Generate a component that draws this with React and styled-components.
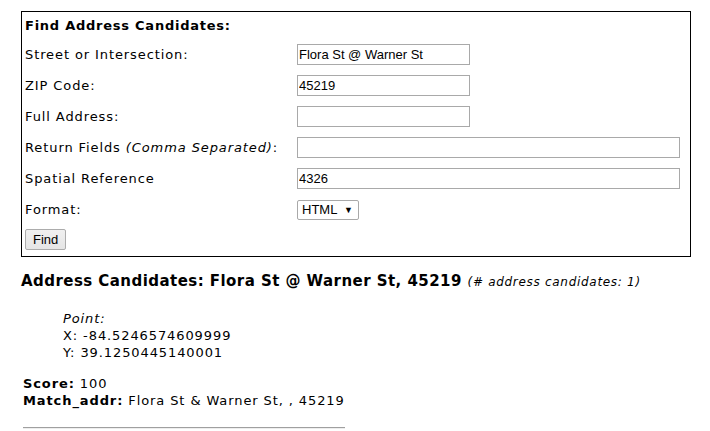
import styled, { createGlobalStyle } from 'styled-components'

const Global = createGlobalStyle`
  html, body { margin: 0; padding: 0; background: #fff; }
  body {
    font-family: "DejaVu Sans", Verdana, sans-serif;
    font-size: 13px;
    letter-spacing: 0.9px;
    color: #000;
  }
`

const Page = styled.div`
  padding: 11px 18px 0 21px;
`

const FormBox = styled.form`
  width: 670px;
  border: 1px solid #000;
  padding: 0 0 2px 2px;
  box-sizing: border-box;
`

const Title = styled.div`
  height: 27px;
  display: flex;
  align-items: center;
  font-weight: bold;
  letter-spacing: 0.75px;
  padding-left: 1px;
`

const Row = styled.div`
  display: grid;
  grid-template-columns: 272px 1fr;
  align-items: center;
  height: ${p => p.$h || 31}px;
  padding-left: 1px;
`

const Label = styled.label`
  white-space: nowrap;
  > i { font-style: italic; }
`

const TextInput = styled.input`
  font-family: "Liberation Sans", Arial, sans-serif;
  font-size: 13px;
  letter-spacing: 0;
  color: #000;
  height: 21px;
  width: ${p => (p.$wide ? '383px' : '173px')};
  box-sizing: border-box;
  border: 1px solid #a9a9a9;
  padding: 0 1px;
  margin: 0;
  outline: none;
`

const SelectBox = styled.div`
  width: 62px;
  height: 20px;
  box-sizing: border-box;
  border: 1px solid #a9a9a9;
  border-radius: 2px;
  display: flex;
  align-items: center;
  justify-content: space-between;
  padding: 0 5px 0 4px;
  font-family: "Liberation Sans", Arial, sans-serif;
  font-size: 13px;
  letter-spacing: 0;
  > span:last-child { font-size: 9px; }
`

const Button = styled.button`
  font-family: "Liberation Sans", Arial, sans-serif;
  font-size: 13px;
  letter-spacing: 0;
  height: 21px;
  padding: 0 7px;
  margin: 0;
  border: 1px solid #acacac;
  border-radius: 2px;
  background: linear-gradient(#f0f0f0, #e5e5e5);
  color: #000;
`

const Heading = styled.h3`
  margin: 15px 0 0 0;
  font-size: 15px;
  font-weight: bold;
  letter-spacing: 0.45px;
  > small {
    font-size: 12px;
    font-weight: normal;
    font-style: italic;
    letter-spacing: 0.7px;
  }
`

const PointBlock = styled.div`
  margin: 20px 0 0 42px;
  line-height: 17px;
  > i { display: block; }
`

const Details = styled.div`
  margin: 14px 0 0 2px;
  line-height: 17px;
  > div > b { font-weight: bold; }
`

const Rule = styled.hr`
  width: 322px;
  margin: 18px 0 0 2px;
  border: 0;
  border-top: 1px solid #a0a0a0;
  border-bottom: 1px solid #eee;
`

export default function App() {
  return (
    <Page>
      <Global />
      <FormBox onSubmit={e => e.preventDefault()}>
        <Title>Find Address Candidates:</Title>
        <Row>
          <Label>Street or Intersection:</Label>
          <TextInput defaultValue="Flora St @ Warner St" />
        </Row>
        <Row>
          <Label>ZIP Code:</Label>
          <TextInput defaultValue="45219" />
        </Row>
        <Row>
          <Label>Full Address:</Label>
          <TextInput defaultValue="" />
        </Row>
        <Row>
          <Label>Return Fields <i>(Comma Separated)</i>:</Label>
          <TextInput $wide defaultValue="" />
        </Row>
        <Row>
          <Label>Spatial Reference</Label>
          <TextInput $wide defaultValue="4326" />
        </Row>
        <Row>
          <Label>Format:</Label>
          <SelectBox><span>HTML</span><span>▼</span></SelectBox>
        </Row>
        <Row $h={29}>
          <div><Button type="submit">Find</Button></div>
        </Row>
      </FormBox>
      <Heading>
        Address Candidates: Flora St @ Warner St, 45219 <small>(# address candidates: 1)</small>
      </Heading>
      <PointBlock>
        <i>Point:</i>
        <div>X: -84.5246574609999</div>
        <div>Y: 39.1250445140001</div>
      </PointBlock>
      <Details>
        <div><b>Score:</b> 100</div>
        <div><b>Match_addr:</b> Flora St &amp; Warner St, , 45219</div>
      </Details>
      <Rule />
    </Page>
  )
}
